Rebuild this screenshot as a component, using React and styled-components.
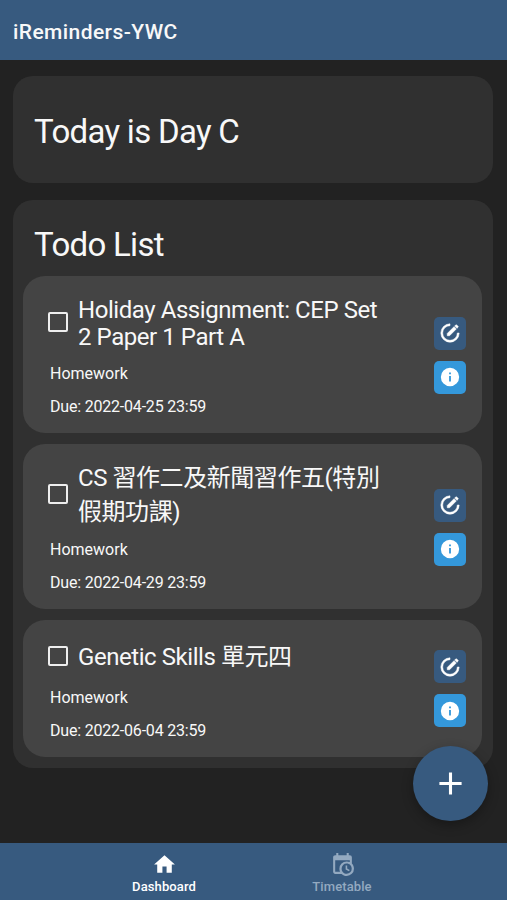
import React, { useState } from "react";
import styled, { createGlobalStyle } from "styled-components";

const todos = [
  {
    id: 1,
    lines: ["Holiday Assignment: CEP Set", "2 Paper 1 Part A"],
    type: "Homework",
    due: "2022-04-25 23:59",
    height: 157,
    titleTop: 21,
    titleGap: 6,
    lineHeight: 27,
    boxShift: -4,
    actionsTop: 40.5,
  },
  {
    id: 2,
    lines: ["CS 習作二及新聞習作五(特別", "假期功課)"],
    type: "Homework",
    due: "2022-04-29 23:59",
    height: 165,
    titleTop: 17,
    titleGap: 4,
    lineHeight: 34,
    boxShift: -3,
    actionsTop: 44.5,
  },
  {
    id: 3,
    lines: ["Genetic Skills 單元四"],
    type: "Homework",
    due: "2022-06-04 23:59",
    height: 137,
    titleTop: 20,
    titleGap: 7,
    lineHeight: 34,
    boxShift: -3,
    actionsTop: 30,
  },
];

const paths = {
  edit: "M12,2A10,10 0 0,0 2,12A10,10 0 0,0 12,22A10,10 0 0,0 22,12H20A8,8 0 0,1 12,20A8,8 0 0,1 4,12A8,8 0 0,1 12,4V2M18.78,3C18.61,3 18.43,3.07 18.3,3.2L17.08,4.41L19.58,6.91L20.8,5.7C21.06,5.44 21.06,5 20.8,4.75L19.25,3.2C19.12,3.07 18.95,3 18.78,3M16.37,5.12L9,12.5V15H11.5L18.87,7.62L16.37,5.12Z",
  info: "M13,9H11V7H13M13,17H11V11H13M12,2A10,10 0 0,0 2,12A10,10 0 0,0 12,22A10,10 0 0,0 22,12A10,10 0 0,0 12,2Z",
  home: "M10,20V14H14V20H19V12H22L12,3L2,12H5V20H10Z",
  calendar:
    "M15,13H16.5V15.82L18.94,17.23L18.19,18.53L15,16.69V13M19,8H5V19H9.67C9.24,18.09 9,17.07 9,16A7,7 0 0,1 16,9C17.07,9 18.09,9.24 19,9.67V8M5,21C3.89,21 3,20.1 3,19V5C3,3.89 3.89,3 5,3H6V1H8V3H16V1H18V3H19A2,2 0 0,1 21,5V11.1C22.24,12.36 23,14.09 23,16A7,7 0 0,1 16,23C14.09,23 12.36,22.24 11.1,21H5M16,11.15A4.85,4.85 0 0,0 11.15,16C11.15,18.68 13.32,20.85 16,20.85A4.85,4.85 0 0,0 20.85,16C20.85,13.32 18.68,11.15 16,11.15Z",
  plus: "M12 4.8V19.2M4.8 12H19.2",
};

function Icon({ name, size, weight = 0 }) {
  return (
    <svg
      width={size}
      height={size}
      viewBox="0 0 24 24"
      fill="currentColor"
      stroke={weight ? "currentColor" : "none"}
      strokeWidth={weight}
    >
      <path d={paths[name]} />
    </svg>
  );
}

function TodoItem({ todo }) {
  const [done, setDone] = useState(false);
  return (
    <Item $height={todo.height}>
      <Details $top={todo.titleTop}>
        <TitleRow $gap={todo.titleGap}>
          <Checkbox
            type="checkbox"
            aria-label={todo.lines.join(" ")}
            checked={done}
            onChange={() => setDone(!done)}
            $shift={todo.boxShift}
          />
          <ItemTitle $lineHeight={todo.lineHeight}>
            {todo.lines.map((line) => (
              <span key={line}>{line}</span>
            ))}
          </ItemTitle>
        </TitleRow>
        <Meta>{todo.type}</Meta>
        <DueDate>Due: {todo.due}</DueDate>
      </Details>
      <Actions $top={todo.actionsTop}>
        <ActionButton $color="#375a7f" aria-label="Edit">
          <Icon name="edit" size={22} weight={0.6} />
        </ActionButton>
        <ActionButton $color="#3498db" aria-label="Info">
          <Icon name="info" size={22} />
        </ActionButton>
      </Actions>
    </Item>
  );
}

export default function App() {
  const [tab, setTab] = useState("dashboard");
  return (
    <Page>
      <GlobalStyle />
      <Header>iReminders-YWC</Header>
      <Main>
        <DayCard>
          <Heading>Today is Day C</Heading>
        </DayCard>
        <TodoCard>
          <Heading>Todo List</Heading>
          <List>
            {todos.map((todo) => (
              <TodoItem key={todo.id} todo={todo} />
            ))}
          </List>
        </TodoCard>
      </Main>
      <AddButton aria-label="Add">
        <svg width="37" height="37" viewBox="0 0 24 24" stroke="currentColor" strokeWidth="2">
          <path d={paths.plus} />
        </svg>
      </AddButton>
      <TabBar>
        <Tab $active={tab === "dashboard"} onClick={() => setTab("dashboard")}>
          <Icon name="home" size={25} />
          Dashboard
        </Tab>
        <Tab $active={tab === "timetable"} onClick={() => setTab("timetable")}>
          <Icon name="calendar" size={25} />
          Timetable
        </Tab>
      </TabBar>
    </Page>
  );
}

const GlobalStyle = createGlobalStyle`
  * {
    box-sizing: border-box;
  }
  body {
    margin: 0;
    background: #222;
  }
  button {
    font: inherit;
    border: none;
    padding: 0;
    cursor: pointer;
  }
  svg {
    display: block;
  }
`;

const Page = styled.div`
  position: relative;
  display: flex;
  flex-direction: column;
  height: 900px;
  overflow: hidden;
  background: #222;
  color: #f8f8f8;
  font-family: Roboto, "Noto Sans CJK TC", sans-serif;
`;

const Header = styled.header`
  height: 60px;
  flex-shrink: 0;
  padding: 3px 13px 0;
  display: flex;
  align-items: center;
  background: #375a7f;
  font-size: 21px;
  font-weight: 500;
  letter-spacing: 0.42px;
`;

const Main = styled.main`
  flex: 1;
  min-height: 0;
  padding: 16px 14px 0 13px;
  display: flex;
  flex-direction: column;
  gap: 17px;
`;

const Card = styled.section`
  border-radius: 20px;
  background: #303030;
`;

const DayCard = styled(Card)`
  height: 107px;
  padding-top: 36px;
`;

const TodoCard = styled(Card)`
  height: 568px;
  padding-top: 25px;
`;

const Heading = styled.h1`
  margin: 0 0 0 21px;
  font-size: 33px;
  font-weight: 400;
  line-height: 40px;
  letter-spacing: -0.7px;
`;

const List = styled.div`
  padding: 11px 11px 0 10px;
  display: flex;
  flex-direction: column;
  gap: 11px;
`;

const Item = styled.article`
  height: ${(p) => p.$height}px;
  padding: 0 16px 0 25px;
  display: flex;
  justify-content: space-between;
  align-items: flex-start;
  border-radius: 22px;
  background: #444;
`;

const Details = styled.div`
  padding-top: ${(p) => p.$top}px;
`;

const TitleRow = styled.div`
  display: flex;
  align-items: center;
  gap: 10px;
  margin-bottom: ${(p) => p.$gap}px;
`;

const Checkbox = styled.input`
  appearance: none;
  flex-shrink: 0;
  width: 20px;
  height: 20px;
  margin: ${(p) => p.$shift}px 0 0;
  border: 2px solid #eee;
  border-radius: 2px;
  &:checked {
    background: #eee;
  }
`;

const ItemTitle = styled.h2`
  margin: 0;
  display: flex;
  flex-direction: column;
  font-size: 24px;
  font-weight: 400;
  line-height: ${(p) => p.$lineHeight}px;
  letter-spacing: -0.44px;
  white-space: nowrap;
`;

const Meta = styled.p`
  margin: 0 0 0 2px;
  font-size: 16px;
  line-height: 33px;
`;

const DueDate = styled(Meta)`
  letter-spacing: -0.2px;
`;

const Actions = styled.div`
  padding-top: ${(p) => p.$top}px;
  display: flex;
  flex-direction: column;
  gap: 11px;
`;

const ActionButton = styled.button`
  width: 32px;
  height: 33px;
  display: flex;
  align-items: center;
  justify-content: center;
  border-radius: 5px;
  background: ${(p) => p.$color};
  color: #fff;
`;

/* floats over the end of the list */
const AddButton = styled.button`
  position: absolute;
  right: 19px;
  bottom: 79px;
  width: 75px;
  height: 75px;
  display: flex;
  align-items: center;
  justify-content: center;
  border-radius: 50%;
  background: #375a7f;
  color: #fff;
  box-shadow: 0 4px 12px rgba(0, 0, 0, 0.3);
`;

const TabBar = styled.nav`
  height: 57px;
  flex-shrink: 0;
  padding: 0 76px 0 75px;
  display: flex;
  justify-content: center;
  background: #375a7f;
`;

const Tab = styled.button`
  flex: 1;
  padding-top: 9px;
  display: flex;
  flex-direction: column;
  align-items: center;
  gap: 2px;
  background: none;
  color: ${(p) => (p.$active ? "#fff" : "#93a9c0")};
  && {
    font-size: 13px;
    font-weight: 500;
    line-height: 15px;
    letter-spacing: 0.1px;
  }
`;
